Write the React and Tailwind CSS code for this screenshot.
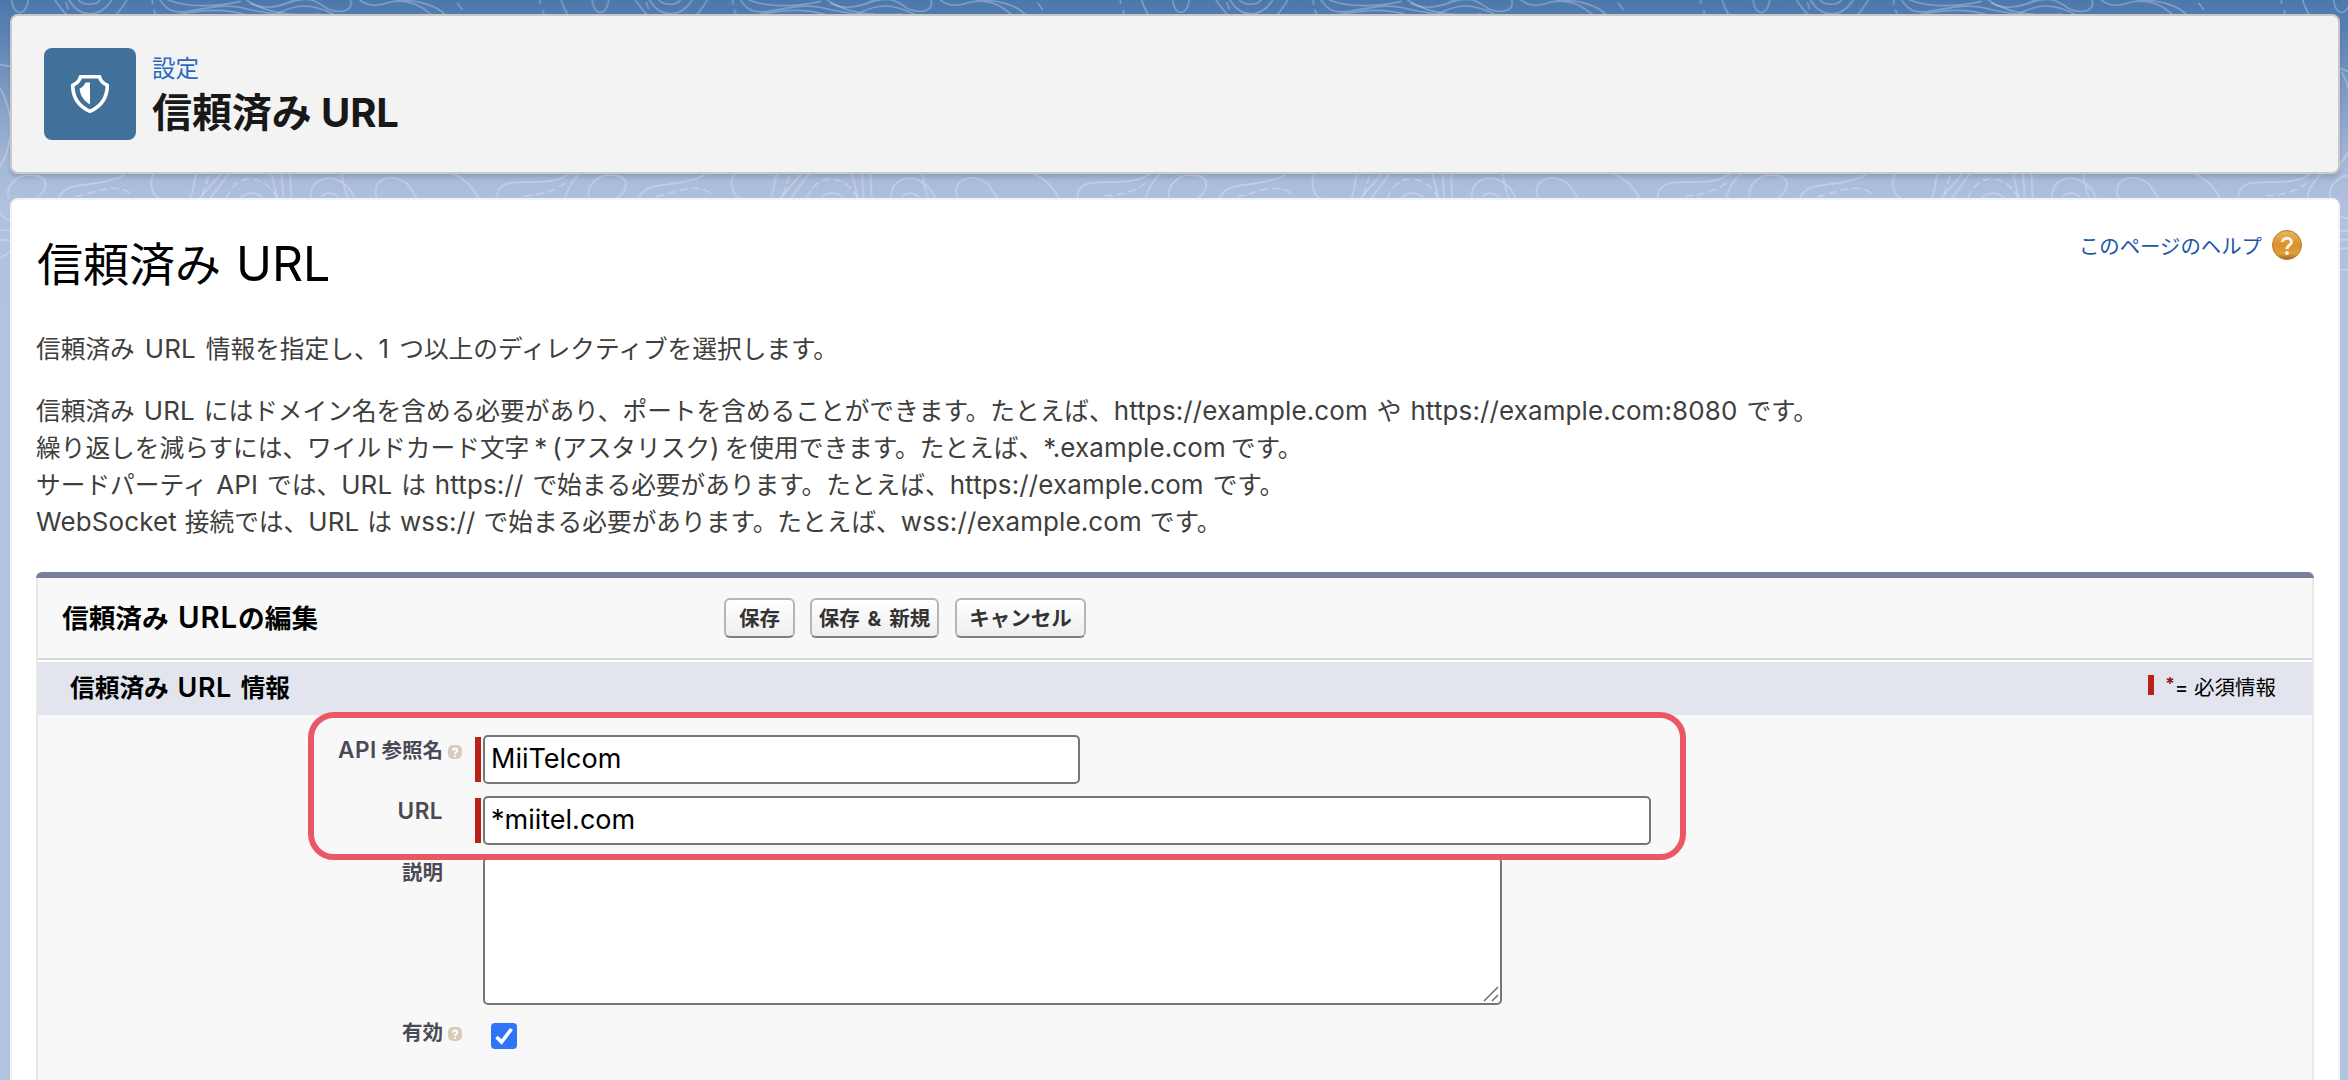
import React from "react";

const description = [
  {
    text: "信頼済み URL にはドメイン名を含める必要があり、ポートを含めることができます。たとえば、https://example.com や https://example.com:8080 です。",
    spacing: "[word-spacing:2px]",
  },
  {
    text: "繰り返しを減らすには、ワイルドカード文字 * (アスタリスク) を使用できます。たとえば、*.example.com です。",
    spacing: "[word-spacing:-2px]",
  },
  {
    text: "サードパーティ API では、URL は https:// で始まる必要があります。たとえば、https://example.com です。",
    spacing: "[word-spacing:2px]",
  },
  {
    text: "WebSocket 接続では、URL は wss:// で始まる必要があります。たとえば、wss://example.com です。",
    spacing: "[word-spacing:1px]",
  },
];

// sets latin runs slightly larger and more open than the kana around them
const Mixed = ({ text, className = "text-[1.05em] tracking-[0.006em]" }) =>
  text.split(/([!-~]+)/).map((part, i) =>
    i % 2 ? (
      <span key={i} className={`leading-none ${className}`}>
        {part}
      </span>
    ) : (
      part
    )
  );

// repeating contour lines behind the cards
const Topography = () => (
  <svg className="absolute inset-0 h-[420px] w-full" aria-hidden="true">
    <defs>
      <pattern id="topo" width="580.5" height="420" patternUnits="userSpaceOnUse">
        <g
          transform="scale(0.33333)"
          fill="none"
          stroke="#fff"
          strokeOpacity="0.27"
          strokeWidth="5"
          strokeLinecap="round"
        >
          <path d="M35 0C40 50 78 50 85 0M165 0C178 20 192 36 205 50M207 0C240 55 300 55 335 0M235 0C250 17 288 17 300 0M380 0C370 20 355 36 345 50" />
          <path d="M198 8l6 18M457 2v10M462 30l5 14" />
          <path d="M480 0C500 30 520 40 560 34C640 20 680 12 730 24C790 40 860 45 900 60M505 0C560 22 640 22 720 4M530 45C620 25 690 28 740 46M740 0C800 40 870 48 960 42" />
          <path d="M830 42C890 12 930 8 1000 42M850 14C930 -18 950 4 985 28C1030 44 1060 28 1052 0M750 10C800 36 860 12 880 0" />
          <path d="M1080 0C1110 24 1140 16 1170 6C1230 -6 1270 22 1300 50M1190 0C1240 0 1310 10 1340 50M1372 10l14 18M1620 0v10M1628 32l4 12M1684 0C1688 20 1698 34 1706 50" />
          <path d="M25 594C15 555 55 522 95 526C150 526 145 570 110 594M175 594C200 540 270 565 350 535C370 528 372 524 374 516M460 522C445 555 460 590 480 596M590 522C578 545 584 570 570 596" />
          <path d="M230 590C280 580 350 545 390 580M625 530C615 560 612 575 605 594M680 594C710 515 790 520 832 594" strokeDasharray="20 16" />
          <path d="M662 522L598 596M685 522L630 596M815 522L832 596M845 522L850 596M870 522L874 596M722 594C740 574 770 576 788 594M932 594C930 515 1035 515 1064 596M965 588C985 574 1000 578 1014 590M1026 522C1028 555 1038 580 1044 596" />
          <path d="M1130 594C1112 530 1180 520 1220 550C1235 570 1240 580 1252 596M1356 518C1390 535 1420 560 1436 596M1490 596C1490 545 1530 545 1610 546C1670 546 1695 532 1712 518M1738 522C1710 550 1700 570 1696 596" />
          <path d="M1575 588C1620 585 1660 575 1695 550" strokeDasharray="20 16" />
          <path d="M0 194C30 198 60 205 90 220M0 265C40 330 44 430 0 500M60 218C80 250 84 290 90 320M50 500L90 440M0 640C10 650 18 660 32 664M0 690C30 692 60 694 90 692M0 720C30 722 60 718 90 720M0 775C20 765 40 740 90 745M50 650C70 655 80 656 90 654M56 810H90" />
        </g>
      </pattern>
    </defs>
    <rect width="100%" height="420" fill="url(#topo)" />
  </svg>
);

const ShieldIcon = () => (
  <svg className="h-[40px] w-[40px]" viewBox="0 0 40 40" fill="none">
    <path
      d="M10.500 2.700H29.500C30.300 6.700 32.800 9.400 37.300 11.200C37.300 23.200 31.800 32 20 37.300C8.200 32 2.700 23.200 2.700 11.200C7.200 9.400 9.700 6.700 10.500 2.700Z"
      stroke="#fff"
      strokeWidth="3.600"
      strokeLinejoin="round"
    />
    <path d="M20 8.500V30.500C14 27 10 21.500 9.600 14.600C12.600 13.200 14.400 11.200 15.400 8.500Z" fill="#fff" />
  </svg>
);

const HelpBadge = () => (
  <svg className="h-[30px] w-[30px]" viewBox="0 0 30 30">
    <defs>
      <linearGradient id="orb" x1="0" y1="0" x2="0" y2="1">
        <stop offset="0" stopColor="#e6b768" />
        <stop offset="0.5" stopColor="#dc8f2c" />
        <stop offset="0.8" stopColor="#dfa03c" />
        <stop offset="1" stopColor="#9c6224" />
      </linearGradient>
    </defs>
    <circle cx="15" cy="15" r="14.5" fill="url(#orb)" stroke="#b97b2f" strokeWidth="1" />
    <path d="M10.500 12C10.500 7 19.500 7 19.500 12C19.500 15 15 15 15 19" fill="none" stroke="#fff3dc" strokeWidth="3" />
    <circle cx="15" cy="23" r="1.900" fill="#fff3dc" />
  </svg>
);

const InfoDot = () => (
  <svg className="h-[14px] w-[14px]" viewBox="0 0 14 14">
    <rect width="14" height="14" rx="5" fill="#d6ccba" />
    <path d="M4.800 5.500C4.800 2.900 9.300 2.900 9.300 5.500C9.300 7 7 7 7 9M7 10.200V12" fill="none" stroke="#fff" strokeWidth="1.900" />
  </svg>
);

const Button = ({ children, className }) => (
  <button
    className={`h-[40px] rounded-[6px] border-2 border-[#b5b5b5] border-b-[#7f7f7f] bg-linear-to-b from-white to-[#eeeeee] text-[20.5px] leading-[37px] font-bold whitespace-nowrap text-[#333] ${className}`}
  >
    {children}
  </button>
);

const Label = ({ children, help, className }) => (
  <div className={`flex h-[30px] w-[437px] shrink-0 items-center text-[20.5px] font-bold text-[#4a4a56] ${className || ""}`}>
    <span className="w-[405px] pt-[2px] text-right whitespace-nowrap">
      <Mixed text={children} className="text-[1.1em] font-semibold tracking-[0.02em]" />
    </span>
    {help && (
      <span className="mt-[4px] ml-[5px]">
        <InfoDot />
      </span>
    )}
  </div>
);

const RequiredInput = ({ value, className }) => (
  <div className="flex items-center gap-[2px]">
    <span className="h-[45px] w-[6px] bg-[#ba2219]" />
    <input
      type="text"
      defaultValue={value}
      className={`h-[49px] rounded-[5px] border-2 border-[#767676] bg-white px-[6px] pb-[2px] text-[27px] text-black outline-none ${className}`}
    />
  </div>
);

const App = () => {
  return (
    <div className="relative h-[1080px] w-full overflow-hidden bg-[#b0c4df] bg-[linear-gradient(180deg,#4b78ac_0px,#5a80b3_30px,#7d9ac4_90px,#a6b8d8_165px,#b1c0de_205px,#b0c4df_330px)] font-['Inter','Noto_Sans_CJK_JP',sans-serif]">
      <Topography />

      <div className="relative pt-[14px] pr-[8px] pl-[10px]">
        <header className="flex h-[160px] items-center rounded-[8px] border-2 border-[#c9c9c9] bg-[#f3f3f3] pr-6 pl-[32px] shadow-[0_4px_4px_rgba(0,0,0,0.12)]">
          <div className="flex h-[92px] w-[92px] items-center justify-center rounded-[8px] bg-[#41719a]">
            <ShieldIcon />
          </div>
          <div className="ml-[16px] pt-[8px]">
            <p className="text-[23.5px] leading-[30px] text-[#2a68c2]">設定</p>
            <h1 className="text-[40px] leading-[58px] font-bold tracking-[-0.1px] text-[#181818]">
              信頼済み URL
            </h1>
          </div>
        </header>

        <main className="mt-[24px] h-[900px] rounded-[8px] border-2 border-[#f3f3f3] bg-white px-[24px]">
          <div className="flex justify-between">
            <h2 className="mt-[31px] ml-[1px] h-[66px] text-[46px] leading-[66px] font-normal text-black [word-spacing:2px]">
              <Mixed text="信頼済み URL" className="text-[1.05em]" />
            </h2>
            <div className="mt-[30px] mr-[12px] flex h-[30px] items-center gap-[10px] text-[20.4px] text-[#1c57a5]">
              <span className="pt-[5px]">このページのヘルプ</span>
              <HelpBadge />
            </div>
          </div>

          <div className="mt-[34px] h-[248px] text-[24.7px] leading-[37.2px] font-normal whitespace-nowrap text-[#3e3e3c]">
            <p className="h-[37.2px] [word-spacing:3px]">
              <Mixed text="信頼済み URL 情報を指定し、1 つ以上のディレクティブを選択します。" />
            </p>
            <div className="mt-[24.500px]">
              {description.map((line) => (
                <p key={line.text} className={`h-[37.2px] ${line.spacing}`}>
                  <Mixed text={line.text} />
                </p>
              ))}
            </div>
          </div>

          <section className="-mt-[7px] h-[520px] overflow-hidden rounded-t-[6px] bg-[#777f99] pt-[6px]">
            <div className="h-full border-x-2 border-[#e8e8e8] bg-[#f8f8f8]">
              <div className="flex h-[82px] items-center border-b-2 border-[#d9d9d9]">
                <h3 className="w-[686px] pl-[24px] text-[26.7px] font-bold text-black [word-spacing:3px]">
                  <Mixed text="信頼済み URLの編集" className="text-[1.1em] font-semibold tracking-[0.03em]" />
                </h3>
                <Button className="w-[71px]">保存</Button>
                <Button className="ml-[15px] w-[129px] [word-spacing:3px]">保存 &amp; 新規</Button>
                <Button className="ml-[16px] w-[131px]">キャンセル</Button>
              </div>

              <div className="flex h-[55px] items-center justify-between border-t-2 border-white bg-[#e2e5ee] pr-[36px] pl-[32px]">
                <h4 className="text-[24.7px] font-bold text-black [word-spacing:3px]">
                  <Mixed text="信頼済み URL 情報" className="text-[1.09em] font-semibold tracking-[0.02em]" />
                </h4>
                <div className="flex items-center text-[20.5px] text-black">
                  <span className="mr-[11px] mb-[7px] h-[20px] w-[6px] bg-[#ba2219]" />
                  <span className="mb-[8px] text-[17px] font-bold text-[#8a1a1a]">*</span>
                  <span>= 必須情報</span>
                </div>
              </div>

              <div className="relative pt-[20px]">
                <div className="flex h-[61px] items-start">
                  <Label help>API 参照名</Label>
                  <RequiredInput value="MiiTelcom" className="w-[597px]" />
                </div>
                <div className="flex h-[61px] items-start">
                  <Label>URL</Label>
                  <RequiredInput value="*miitel.com" className="w-[1168px]" />
                </div>
                <div className="flex h-[166px] items-start">
                  <Label>説明</Label>
                  <div className="relative ml-[8px] h-[148px] w-[1019px]">
                    <textarea className="block h-full w-full resize-none rounded-[5px] border-2 border-[#767676] bg-white outline-none" />
                    <svg
                      className="absolute right-[3px] bottom-[3px] h-[16px] w-[16px]"
                      viewBox="0 0 16 16"
                      stroke="#6b6b6b"
                      strokeWidth="1.500"
                    >
                      <path d="M1 15L15 1M9 15L15 9" />
                    </svg>
                  </div>
                </div>
                <div className="flex h-[61px] items-start">
                  <Label help className="mt-[-6px]">
                    有効
                  </Label>
                  <div className="ml-[16px] flex h-[26px] w-[26px] items-center justify-center rounded-[4px] bg-[#2f73f7]">
                    <svg className="h-[20px] w-[20px]" viewBox="0 0 20 20" fill="none">
                      <path d="M2.500 11L7.500 16L17.500 3" stroke="#fff" strokeWidth="3.600" />
                    </svg>
                  </div>
                </div>

                {/* highlight around the two required fields */}
                <div className="pointer-events-none absolute top-[-3px] left-[270px] h-[148px] w-[1378px] rounded-[26px] border-[6px] border-[#eb5763]" />
              </div>
            </div>
          </section>
        </main>
      </div>
    </div>
  );
};

export default App;
